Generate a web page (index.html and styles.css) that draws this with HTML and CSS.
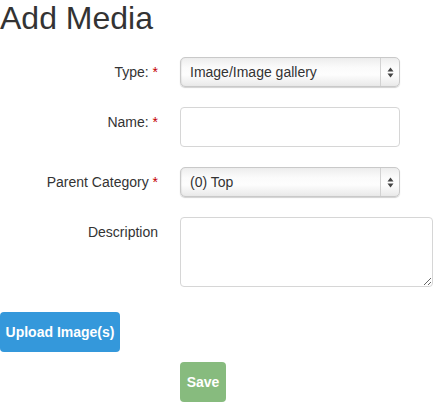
FILE: index.html
```html
<!DOCTYPE html>
<html>
<head>
<meta charset="utf-8">
<link rel="stylesheet" href="styles.css">
</head>
<body>
<h1 class="title">Add Media</h1>
<form class="form">
  <label class="label">Type: <span class="req">*</span></label>
  <div class="select-wrap">
    <select class="select"><option>Image/Image gallery</option></select>
    <span class="arrows">
      <svg width="7" height="11" viewBox="0 0 7 11"><path d="M3.5 0.5 L6.5 4.5 L0.5 4.5 Z" fill="#444"/><path d="M3.5 10.5 L6.5 6.5 L0.5 6.5 Z" fill="#444"/></svg>
    </span>
  </div>

  <label class="label">Name: <span class="req">*</span></label>
  <input class="input" type="text">

  <label class="label">Parent Category <span class="req">*</span></label>
  <div class="select-wrap">
    <select class="select"><option>(0) Top</option></select>
    <span class="arrows">
      <svg width="7" height="11" viewBox="0 0 7 11"><path d="M3.5 0.5 L6.5 4.5 L0.5 4.5 Z" fill="#444"/><path d="M3.5 10.5 L6.5 6.5 L0.5 6.5 Z" fill="#444"/></svg>
    </span>
  </div>

  <label class="label">Description</label>
  <textarea class="textarea"></textarea>
</form>
<div class="upload-row">
  <button class="btn btn-upload" type="button">Upload Image(s)</button>
</div>
<div class="save-row">
  <button class="btn btn-save" type="button">Save</button>
</div>
</body>
</html>
```

FILE: styles.css
```css
html, body {
  margin: 0;
  padding: 0;
  background: #fff;
}
body {
  font-family: "Liberation Sans", Arial, sans-serif;
  font-size: 14px;
  line-height: 20px;
  color: #333;
  width: 440px;
}
.title {
  margin: 0;
  font-size: 32px;
  line-height: 36px;
  font-weight: normal;
  color: #333;
}
.form {
  margin-top: 21px;
  display: grid;
  grid-template-columns: 160px 1fr;
  column-gap: 20px;
  row-gap: 20px;
  align-items: start;
}
.label {
  text-align: right;
  padding-top: 5px;
  padding-right: 2px;
  color: #333;
}
.req {
  color: #c40000;
}
.select-wrap {
  position: relative;
  width: 220px;
  height: 30px;
}
.select {
  appearance: none;
  -webkit-appearance: none;
  box-sizing: border-box;
  width: 220px;
  height: 30px;
  margin: 0;
  padding: 0 0 0 9px;
  border: 1px solid #c9c9c9;
  border-radius: 5px;
  background: linear-gradient(to bottom, #ededed 0%, #fbfbfb 35%, #fdfdfd 60%, #e9e9e9 100%);
  box-shadow: 0 1px 1px rgba(0,0,0,0.18), inset 1px 0 1px rgba(0,0,0,0.06);
  font-family: "Liberation Sans", Arial, sans-serif;
  font-size: 14px;
  color: #333;
  outline: none;
}
.arrows {
  position: absolute;
  top: 1px;
  right: 0;
  width: 19px;
  height: 28px;
  border-left: 1px solid #d2d2d2;
  display: flex;
  align-items: center;
  justify-content: center;
  pointer-events: none;
}
.input {
  box-sizing: border-box;
  width: 220px;
  height: 40px;
  margin: 0;
  border: 1px solid #d6d6d6;
  border-radius: 4px;
  background: #fff;
  outline: none;
}
.textarea {
  box-sizing: border-box;
  width: 253px;
  height: 70px;
  margin: 0;
  border: 1px solid #d6d6d6;
  border-radius: 4px;
  background: #fff;
  display: block;
  outline: none;
}
.upload-row {
  margin-top: 25px;
  display: flex;
}
.save-row {
  margin-top: 10px;
  padding-left: 180px;
  display: flex;
}
.btn {
  box-sizing: border-box;
  height: 40px;
  margin: 0;
  border: none;
  border-radius: 4px;
  color: #fff;
  font-family: "Liberation Sans", Arial, sans-serif;
  font-size: 14px;
  font-weight: bold;
  cursor: pointer;
}
.btn-upload {
  width: 120px;
  padding: 0;
  background: #3498db;
}
.btn-save {
  width: 46px;
  padding: 0;
  background: #87bb7e;
}
```
